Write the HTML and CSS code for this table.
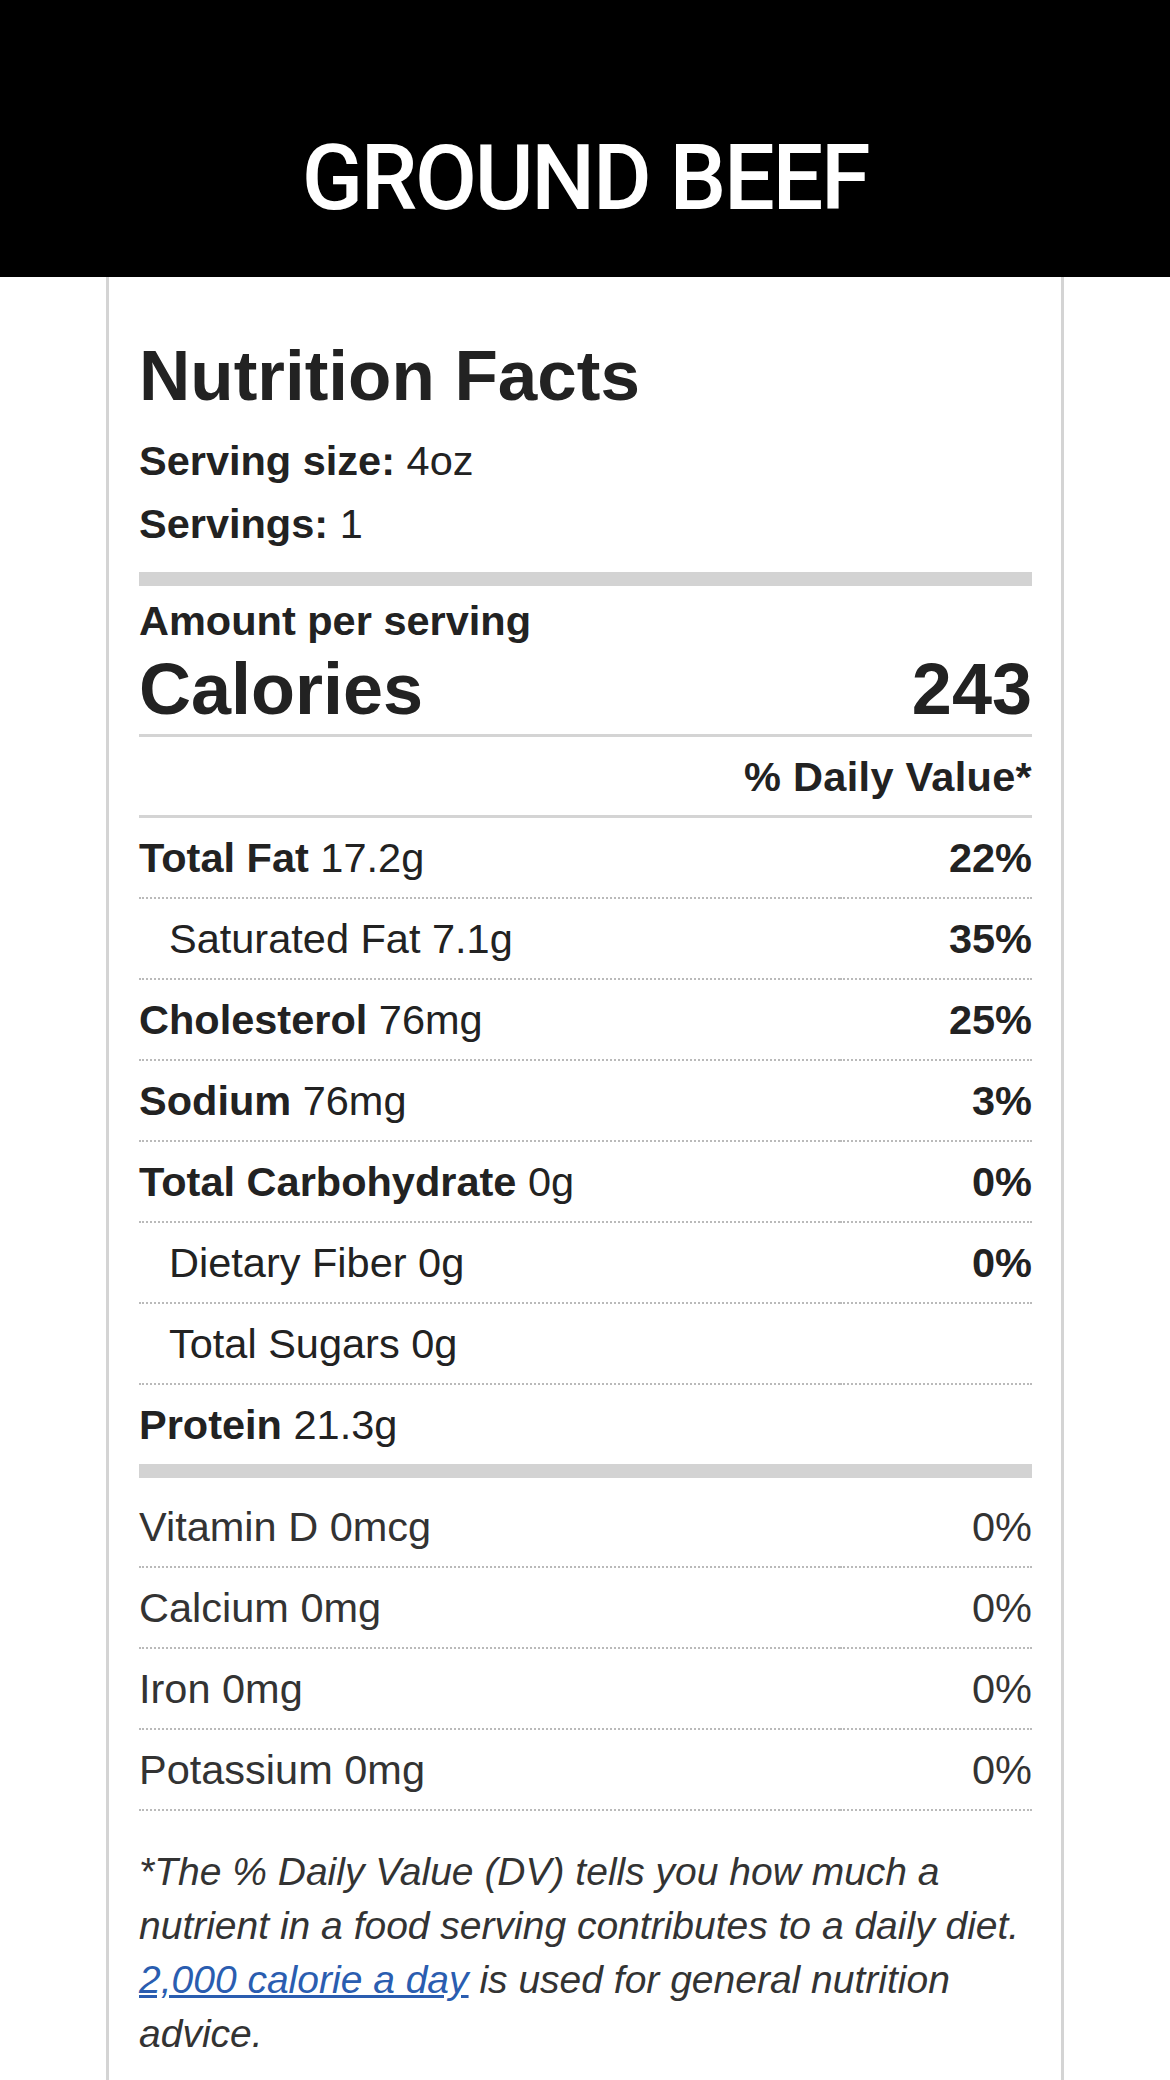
FILE: index.html
```html
<!DOCTYPE html>
<html lang="en">
<head>
<meta charset="utf-8">
<title>Ground Beef — Nutrition Facts</title>
<link rel="stylesheet" href="styles.css">
</head>
<body>
<header class="banner">
  <h1 class="banner-title">GROUND BEEF</h1>
</header>
<main class="card">
  <h2 class="nf-title">Nutrition Facts</h2>
  <p class="serving first"><strong>Serving size:</strong> 4oz</p>
  <p class="serving"><strong>Servings:</strong> 1</p>
  <div class="bar"></div>
  <p class="amount">Amount per serving</p>
  <div class="calories"><span>Calories</span><span>243</span></div>
  <div class="dv-head">% Daily Value*</div>

  <div class="nutrients">
    <div class="row"><div class="cell name"><strong>Total Fat</strong> 17.2g</div><div class="cell pct">22%</div></div>
    <div class="row"><div class="cell name indent">Saturated Fat 7.1g</div><div class="cell pct">35%</div></div>
    <div class="row"><div class="cell name"><strong>Cholesterol</strong> 76mg</div><div class="cell pct">25%</div></div>
    <div class="row"><div class="cell name"><strong>Sodium</strong> 76mg</div><div class="cell pct">3%</div></div>
    <div class="row"><div class="cell name"><strong>Total Carbohydrate</strong> 0g</div><div class="cell pct">0%</div></div>
    <div class="row"><div class="cell name indent">Dietary Fiber 0g</div><div class="cell pct">0%</div></div>
    <div class="row"><div class="cell name indent">Total Sugars 0g</div><div class="cell pct"></div></div>
    <div class="row last"><div class="cell name"><strong>Protein</strong> 21.3g</div><div class="cell pct"></div></div>
  </div>

  <div class="bar bar-lower"></div>

  <div class="vitamins">
    <div class="row vrow"><div class="cell name">Vitamin D 0mcg</div><div class="cell pct">0%</div></div>
    <div class="row vrow"><div class="cell name">Calcium 0mg</div><div class="cell pct">0%</div></div>
    <div class="row vrow"><div class="cell name">Iron 0mg</div><div class="cell pct">0%</div></div>
    <div class="row vrow"><div class="cell name">Potassium 0mg</div><div class="cell pct">0%</div></div>
  </div>

  <p class="footnote">*The % Daily Value (DV) tells you how much a nutrient in a food serving contributes to a daily diet. <a href="#">2,000 calorie a day</a> is used for general nutrition advice.</p>
</main>
</body>
</html>
```

FILE: styles.css
```css
html, body {
  margin: 0;
  padding: 0;
  background: #fff;
}

body {
  font-family: "Liberation Sans", Arial, Helvetica, sans-serif;
  color: #222;
}

.banner {
  height: 277px;
  box-sizing: border-box;
  padding-top: 129px;
  background: #000;
  text-align: center;
}

.banner-title {
  margin: 0;
  font-family: Roboto, "Liberation Sans", sans-serif;
  font-weight: 500;
  font-size: 90px;
  line-height: 100px;
  letter-spacing: -2.3px;
  color: #fff;
}

.card {
  width: 958px;
  box-sizing: border-box;
  margin: 0 auto;
  border-left: 3px solid #d4d4d4;
  border-right: 3px solid #d4d4d4;
  padding: 59px 29px 80px 30px;
}

.nf-title {
  margin: 0;
  font-size: 71px;
  line-height: 80px;
  font-weight: 700;
}

.serving {
  margin: 0;
  font-size: 41.5px;
  line-height: 63px;
}

.serving.first {
  margin-top: 13px;
}

.bar {
  height: 14px;
  margin-top: 17px;
  background: #d3d3d3;
}

.amount {
  margin: 11px 0 0;
  font-size: 41.5px;
  line-height: 48px;
  font-weight: 700;
}

.calories {
  display: flex;
  justify-content: space-between;
  font-size: 72px;
  line-height: 89px;
  font-weight: 700;
  border-bottom: 3px solid #d4d4d4;
}

.dv-head {
  padding-top: 2px;
  text-align: right;
  font-size: 41.5px;
  line-height: 76px;
  font-weight: 700;
  letter-spacing: 0.3px;
  border-bottom: 3px solid #d4d4d4;
}

.row {
  display: grid;
  grid-template-columns: 1fr 192px;
  font-size: 41.5px;
  line-height: 78px;
}

.cell {
  padding-top: 1px;
  border-bottom: 2px dotted #bababa;
  white-space: nowrap;
}

.row.last .cell {
  border-bottom: none;
}

.pct {
  text-align: right;
  font-weight: 700;
}

.indent {
  padding-left: 30px;
}

.bar-lower {
  margin-top: 0;
  margin-bottom: 9px;
}

.vrow {
  color: #333;
}

.vrow .pct {
  font-weight: 400;
}

.footnote {
  margin: 34px 0 0;
  font-size: 39px;
  line-height: 54px;
  font-style: italic;
  color: #333;
}

.footnote a {
  color: #2a5db0;
  text-decoration: underline;
}
```
